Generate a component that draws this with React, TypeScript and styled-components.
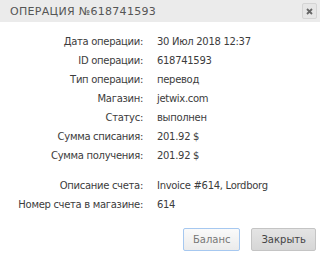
import styled, { createGlobalStyle } from 'styled-components'

const Global = createGlobalStyle`
  html, body {
    margin: 0;
    padding: 0;
    background: #ffffff;
  }
`

const Dialog = styled.div`
  width: 320px;
  height: 254px;
  background: #ffffff;
  display: flex;
  flex-direction: column;
  font-family: 'DejaVu Sans', sans-serif;
`

const Header = styled.div`
  height: 22px;
  background: #ebebeb;
  display: flex;
  align-items: center;
  justify-content: space-between;
  padding: 0 3px 0 10px;

  span {
    color: #555555;
    font-size: 11px;
    letter-spacing: 0.3px;
  }
`

const CloseButton = styled.div`
  width: 13px;
  height: 14px;
  border: 1px solid #d4d4d4;
  border-radius: 2px;
  background: #e6e6e6;
  display: flex;
  align-items: center;
  justify-content: center;
`

const Body = styled.div`
  padding: 14px 0 0 0;
  display: flex;
  flex-direction: column;
`

const Group = styled.div<{ $gap?: number }>`
  display: grid;
  grid-template-columns: 143px 1fr;
  column-gap: 14px;
  row-gap: 7px;
  margin-top: ${(p) => p.$gap ?? 0}px;
`

const Label = styled.div`
  text-align: right;
  font-size: 10px;
  line-height: 12px;
  letter-spacing: -0.3px;
  color: #3c3c3c;
`

const Value = styled.div`
  font-size: 10px;
  line-height: 12px;
  letter-spacing: -0.3px;
  color: #3c3c3c;
`

const Footer = styled.div`
  display: flex;
  justify-content: flex-end;
  gap: 11px;
  padding: 17px 4px 0 0;
`

const Button = styled.button<{ $primary?: boolean }>`
  height: 23px;
  padding: 0 9px;
  font-family: Verdana, 'DejaVu Sans', sans-serif;
  font-size: 10px;
  border-radius: 2px;
  color: ${(p) => (p.$primary ? '#777777' : '#444444')};
  background: ${(p) =>
    p.$primary
      ? 'linear-gradient(#fafafa, #ebebeb)'
      : 'linear-gradient(#e4e4e4, #d6d6d6)'};
  border: 1px solid ${(p) => (p.$primary ? '#a6c8f0' : '#c4c4c4')};
`

const rows: [string, string][] = [
  ['Дата операции:', '30 Июл 2018 12:37'],
  ['ID операции:', '618741593'],
  ['Тип операции:', 'перевод'],
  ['Магазин:', 'jetwix.com'],
  ['Статус:', 'выполнен'],
  ['Сумма списания:', '201.92 $'],
  ['Сумма получения:', '201.92 $'],
]

const extra: [string, string][] = [
  ['Описание счета:', 'Invoice #614, Lordborg'],
  ['Номер счета в магазине:', '614'],
]

export default function App() {
  return (
    <>
      <Global />
      <Dialog>
        <Header>
          <span>ОПЕРАЦИЯ №618741593</span>
          <CloseButton>
            <svg width="7" height="7" viewBox="0 0 7 7">
              <path d="M1 1L6 6M6 1L1 6" stroke="#666" strokeWidth="1.8" />
            </svg>
          </CloseButton>
        </Header>
        <Body>
          <Group>
            {rows.map(([l, v]) => (
              <>
                <Label key={l}>{l}</Label>
                <Value>{v}</Value>
              </>
            ))}
          </Group>
          <Group $gap={18}>
            {extra.map(([l, v]) => (
              <>
                <Label key={l}>{l}</Label>
                <Value>{v}</Value>
              </>
            ))}
          </Group>
        </Body>
        <Footer>
          <Button $primary>Баланс</Button>
          <Button>Закрыть</Button>
        </Footer>
      </Dialog>
    </>
  )
}
